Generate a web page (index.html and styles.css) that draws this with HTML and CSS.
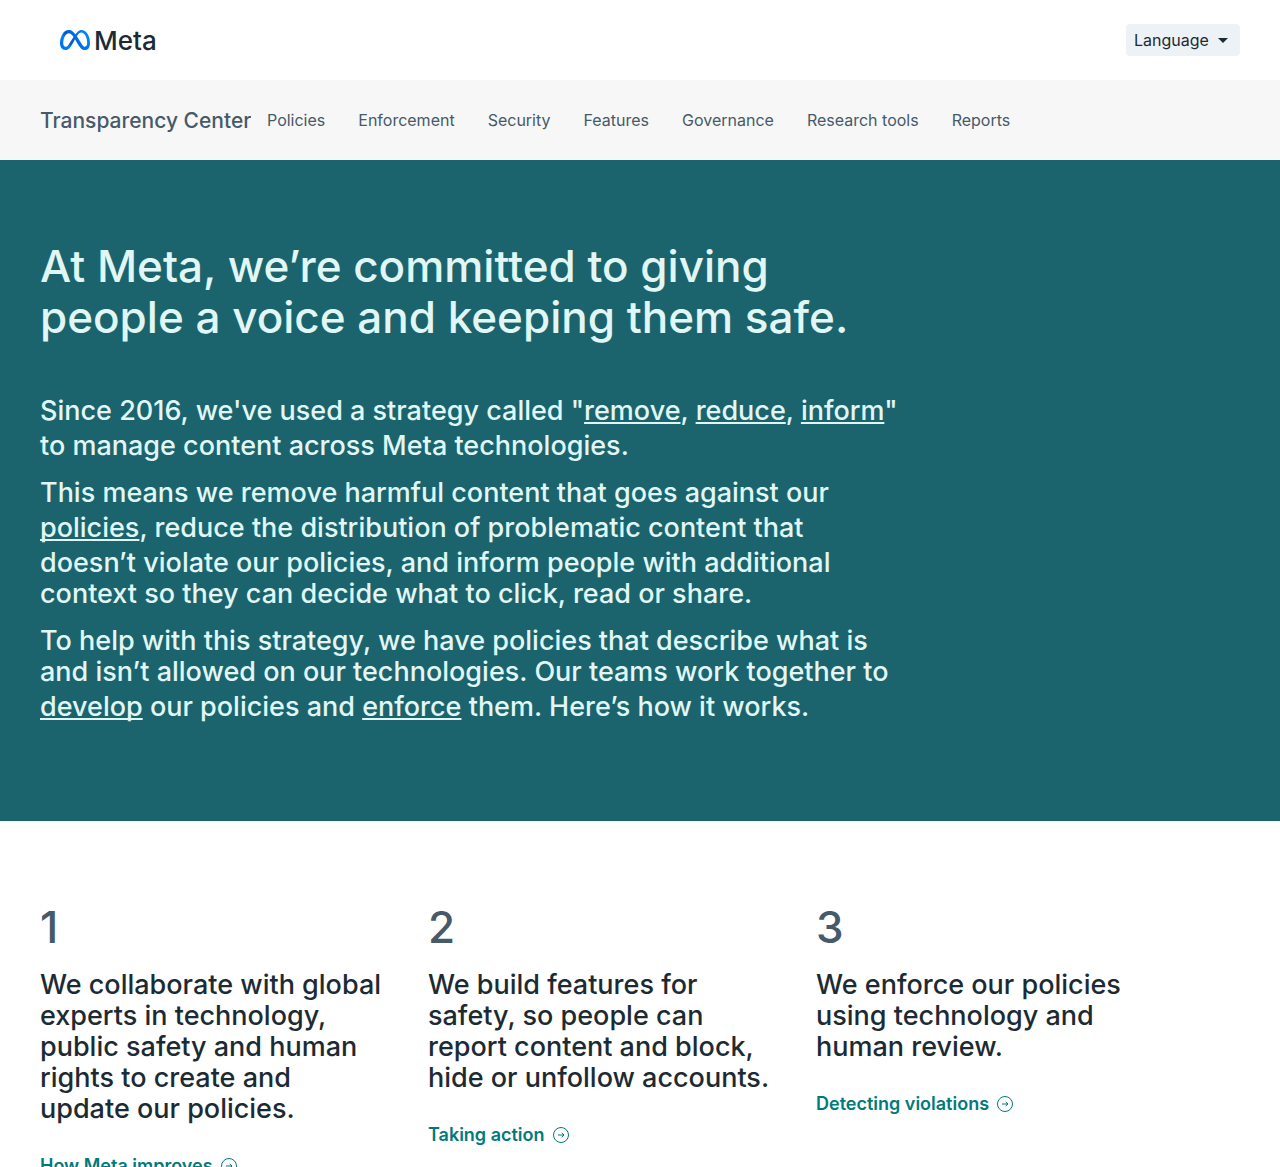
FILE: index.html
```html
<!DOCTYPE html>
<html lang="en">
<head>
  <meta charset="UTF-8">
  <meta name="viewport" content="width=device-width, initial-scale=1">
  <title>Transparency Center</title>
  <link rel="stylesheet" href="styles.css">
</head>
<body>
  <!-- Top bar -->
  <header class="top-bar">
    <a class="logo" href="#">
      <svg class="logo-mark" viewBox="0 4 24 16" aria-hidden="true">
        <defs>
          <linearGradient id="loop" x1="0" y1="1" x2="1" y2="0.6">
            <stop offset="0" stop-color="#0064e0"/>
            <stop offset="0.3" stop-color="#0082fb"/>
            <stop offset="0.45" stop-color="#0058c8"/>
            <stop offset="0.7" stop-color="#0070ec"/>
            <stop offset="1" stop-color="#0082fb"/>
          </linearGradient>
        </defs>
        <path fill="url(#loop)" d="M6.915 4.03c-1.968 0-3.683 1.28-4.871 3.113C.704 9.208 0 11.883 0 14.449c0 .706.07 1.369.21 1.973a6.624 6.624 0 0 0 .265.86 5.297 5.297 0 0 0 .371.761c.696 1.159 1.818 1.927 3.593 1.927 1.497 0 2.633-.671 3.965-2.444.76-1.012 1.144-1.626 2.663-4.32l.756-1.339.186-.325c.061.1.121.196.183.3l2.152 3.595c.724 1.21 1.665 2.556 2.47 3.314 1.046.987 1.992 1.22 3.06 1.22 1.075 0 1.876-.355 2.455-.843a3.743 3.743 0 0 0 .81-.973c.542-.939.861-2.127.861-3.745 0-2.72-.681-5.357-2.084-7.45-1.282-1.912-2.957-2.93-4.716-2.93-1.047 0-2.088.467-3.053 1.308-.652.57-1.257 1.29-1.82 2.05-.69-.875-1.335-1.547-1.958-2.056-1.182-.966-2.315-1.303-3.454-1.303zm10.16 2.053c1.147 0 2.188.758 2.992 1.999 1.132 1.748 1.647 4.195 1.647 6.4 0 1.548-.368 2.9-1.839 2.9-.58 0-1.027-.23-1.664-1.004-.496-.601-1.343-1.878-2.832-4.358l-.617-1.028a44.908 44.908 0 0 0-1.255-1.98c.07-.109.141-.224.211-.327 1.12-1.667 2.118-2.602 3.358-2.602zm-10.201.553c1.265 0 2.058.791 2.675 1.446.307.327.737.871 1.234 1.579l-1.02 1.566c-.757 1.163-1.882 3.017-2.837 4.338-1.191 1.649-1.81 1.817-2.486 1.817-.524 0-1.038-.237-1.383-.794-.263-.426-.464-1.13-.464-2.046 0-2.221.63-4.535 1.66-6.088.454-.687.964-1.226 1.533-1.533a2.264 2.264 0 0 1 1.088-.285z"/>
      </svg>
      <span>Meta</span>
    </a>
    <div class="language">
      <select id="language" aria-label="Language">
        <option>Language</option>
      </select>
      <svg class="caret" viewBox="0 0 10 5" aria-hidden="true"><path d="M0 0h10L5 5z"/></svg>
    </div>
  </header>

  <!-- Site navigation -->
  <nav class="site-nav">
    <a class="site-name" href="#">Transparency Center</a>
    <ul class="nav-links">
      <li><a href="#">Policies</a></li>
      <li><a href="#">Enforcement</a></li>
      <li><a href="#">Security</a></li>
      <li><a href="#">Features</a></li>
      <li><a href="#">Governance</a></li>
      <li><a href="#">Research tools</a></li>
      <li><a href="#">Reports</a></li>
    </ul>
  </nav>

  <main>
    <!-- Hero -->
    <section class="hero">
      <h1>At Meta, we’re committed to giving people a voice and keeping them safe.</h1>
      <div class="hero-text">
        <p>Since 2016, we've used a strategy called "<a href="#">remove</a>, <a href="#">reduce</a>, <a href="#">inform</a>" to manage content across Meta technologies.</p>
        <p>This means we remove harmful content that goes against our <a href="#">policies</a>, reduce the distribution of problematic content that doesn’t violate our policies, and inform people with additional context so they can decide what to click, read or share.</p>
        <p>To help with this strategy, we have policies that describe what is and isn’t allowed on our technologies. Our teams work together to <a href="#">develop</a> our policies and <a href="#">enforce</a> them. Here’s how it works.</p>
      </div>
    </section>

    <!-- Steps -->
    <section class="steps">
      <article class="step">
        <div class="step-number">1</div>
        <p>We collaborate with global experts in technology, public safety and human rights to create and update our policies.</p>
        <a class="step-link" href="#">How Meta improves
          <svg viewBox="0 0 16 16" aria-hidden="true"><circle cx="8" cy="8" r="7.5"/><path d="M5 8h6M8.700 5.800L11 8l-2.300 2.200"/></svg>
        </a>
      </article>
      <article class="step">
        <div class="step-number">2</div>
        <p>We build features for safety, so people can report content and block, hide or unfollow accounts.</p>
        <a class="step-link" href="#">Taking action
          <svg viewBox="0 0 16 16" aria-hidden="true"><circle cx="8" cy="8" r="7.5"/><path d="M5 8h6M8.700 5.800L11 8l-2.300 2.200"/></svg>
        </a>
      </article>
      <article class="step">
        <div class="step-number">3</div>
        <p>We enforce our policies using technology and human review.</p>
        <a class="step-link" href="#">Detecting violations
          <svg viewBox="0 0 16 16" aria-hidden="true"><circle cx="8" cy="8" r="7.5"/><path d="M5 8h6M8.700 5.800L11 8l-2.300 2.200"/></svg>
        </a>
      </article>
    </section>
  </main>
</body>
</html>
```
FILE: styles.css
```css
:root {
  --ink: #1c2b33;
  --slate: #465a69;
  --teal: #1b646e;
  --teal-link: #007a7c;
  --mint: #e0f7f5;
}

* {
  box-sizing: border-box;
}

body {
  margin: 0;
  background: #fff;
  color: var(--ink);
  font-family: Inter, sans-serif;
}

a {
  color: inherit;
  text-decoration: none;
}

h1, p, ul {
  margin: 0;
  padding: 0;
  font-weight: 500;
}

/* Top bar */
.top-bar {
  display: flex;
  align-items: center;
  justify-content: space-between;
  height: 80px;
  padding: 0 40px 0 60px;
}

.logo {
  display: flex;
  align-items: center;
  gap: 4px;
  font-size: 26px;
  font-weight: 500;
}

.logo-mark {
  width: 30px;
  height: 20px;
}

.language {
  position: relative;
}

.language select {
  appearance: none;
  width: 114px;
  height: 32px;
  padding: 0 28px 0 8px;
  border: 0;
  border-radius: 4px;
  background: #edf2f6;
  color: var(--ink);
  font: 400 16px Inter, sans-serif;
}

.caret {
  position: absolute;
  top: 14px;
  right: 12px;
  width: 10px;
  height: 5px;
  fill: var(--ink);
  pointer-events: none;
}

/* Site navigation */
.site-nav {
  display: flex;
  align-items: center;
  gap: 16px;
  height: 80px;
  padding: 0 40px;
  background: #f7f7f7;
  color: var(--slate);
}

.site-name {
  width: 211px;
  overflow: hidden;
  white-space: nowrap;
  font-size: 21px;
  font-weight: 500;
}

.nav-links {
  display: flex;
  gap: 33px;
  list-style: none;
  font-size: 16px;
  font-weight: 400;
  white-space: nowrap;
}

/* Hero */
.hero {
  padding: 81px 40px 95px;
  background: var(--teal);
  color: var(--mint);
}

.hero h1 {
  max-width: 864px;
  margin-bottom: 48px;
  font-size: 44px;
  line-height: 51px;
}

.hero-text {
  display: flex;
  flex-direction: column;
  gap: 16px;
  max-width: 864px;
  font-size: 27px;
  line-height: 31px;
}

.hero-text a {
  line-height: 39px;
  text-decoration: underline;
  text-decoration-thickness: 2px;
  text-decoration-skip-ink: none;
  text-underline-offset: 2px;
}

/* Steps */
.steps {
  display: grid;
  grid-template-columns: repeat(3, 1fr);
  gap: 44px;
  padding: 81px 120px 80px 40px;
}

.step-number {
  margin-bottom: 16px;
  color: var(--slate);
  font-size: 44px;
  font-weight: 500;
  line-height: 51px;
}

.step p {
  margin-bottom: 30px;
  font-size: 27px;
  line-height: 31px;
}

.step-link {
  display: flex;
  align-items: center;
  gap: 8px;
  color: var(--teal-link);
  font-size: 18px;
  font-weight: 600;
  line-height: 24px;
}

.step-link svg {
  width: 16px;
  height: 16px;
  fill: none;
  stroke: currentColor;
  stroke-width: 1;
}
```
